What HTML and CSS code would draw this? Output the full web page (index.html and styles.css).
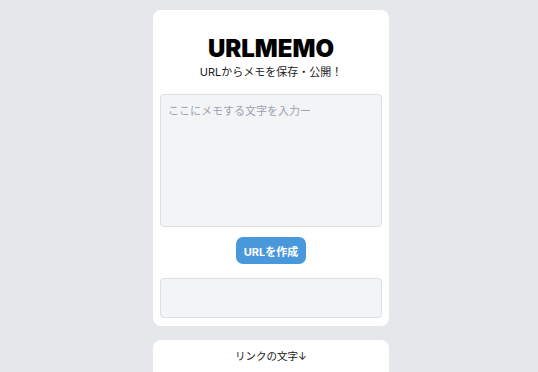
FILE: index.html
```
<!DOCTYPE html>
<html lang="ja">
<head>
<meta charset="utf-8">
<link rel="stylesheet" href="styles.css">
</head>
<body>
<main class="page">
  <section class="card">
    <h1 class="title">URLMEMO</h1>
    <p class="subtitle">URLからメモを保存・公開！</p>
    <textarea class="memo" placeholder="ここにメモする文字を入力ー"></textarea>
    <button class="btn">URLを作成</button>
    <div class="output"></div>
  </section>
  <section class="card card2">
    <p class="link-label">リンクの文字↓</p>
  </section>
</main>
</body>
</html>
```
FILE: styles.css
```
* { box-sizing: border-box; }
html, body { margin: 0; padding: 0; }
body {
  background: #e5e7eb;
  font-family: Inter, "Noto Sans CJK JP", sans-serif;
  color: #111;
  overflow: hidden;
  height: 372px;
}
.page {
  display: flex;
  flex-direction: column;
  align-items: center;
  gap: 14px;
  padding-top: 10px;
  padding-left: 4px;
}
.card {
  width: 236px;
  background: #fff;
  border-radius: 8px;
  padding: 24px 7px 8px;
  display: flex;
  flex-direction: column;
  align-items: center;
}
.title {
  margin: 0;
  font-size: 24px;
  line-height: 30px;
  font-weight: 900;
  letter-spacing: 0;
  color: #000;
}
.subtitle {
  margin: 0;
  font-size: 11px;
  line-height: 16px;
  color: #222;
}
.memo {
  margin-top: 14px;
  width: 222px;
  height: 133px;
  background: #f3f4f6;
  border: 1px solid #dcdfe4;
  border-radius: 4px;
  padding: 7px 7px;
  font-family: inherit;
  font-size: 11px;
  resize: none;
  outline: none;
}
.memo::placeholder { color: #9ca3af; }
.btn {
  margin-top: 10px;
  width: 70px;
  height: 27px;
  background: #4a98dc;
  color: #fff;
  border: none;
  border-radius: 7px;
  font-family: inherit;
  font-size: 11px;
  font-weight: 700;
  padding: 0;
}
.output {
  margin-top: 14px;
  width: 222px;
  height: 40px;
  background: #f3f4f6;
  border: 1px solid #dcdfe4;
  border-radius: 4px;
}
.card2 {
  padding: 9px 7px 20px;
}
.link-label {
  margin: 0;
  font-size: 10.5px;
  line-height: 16px;
  color: #222;
}
```
